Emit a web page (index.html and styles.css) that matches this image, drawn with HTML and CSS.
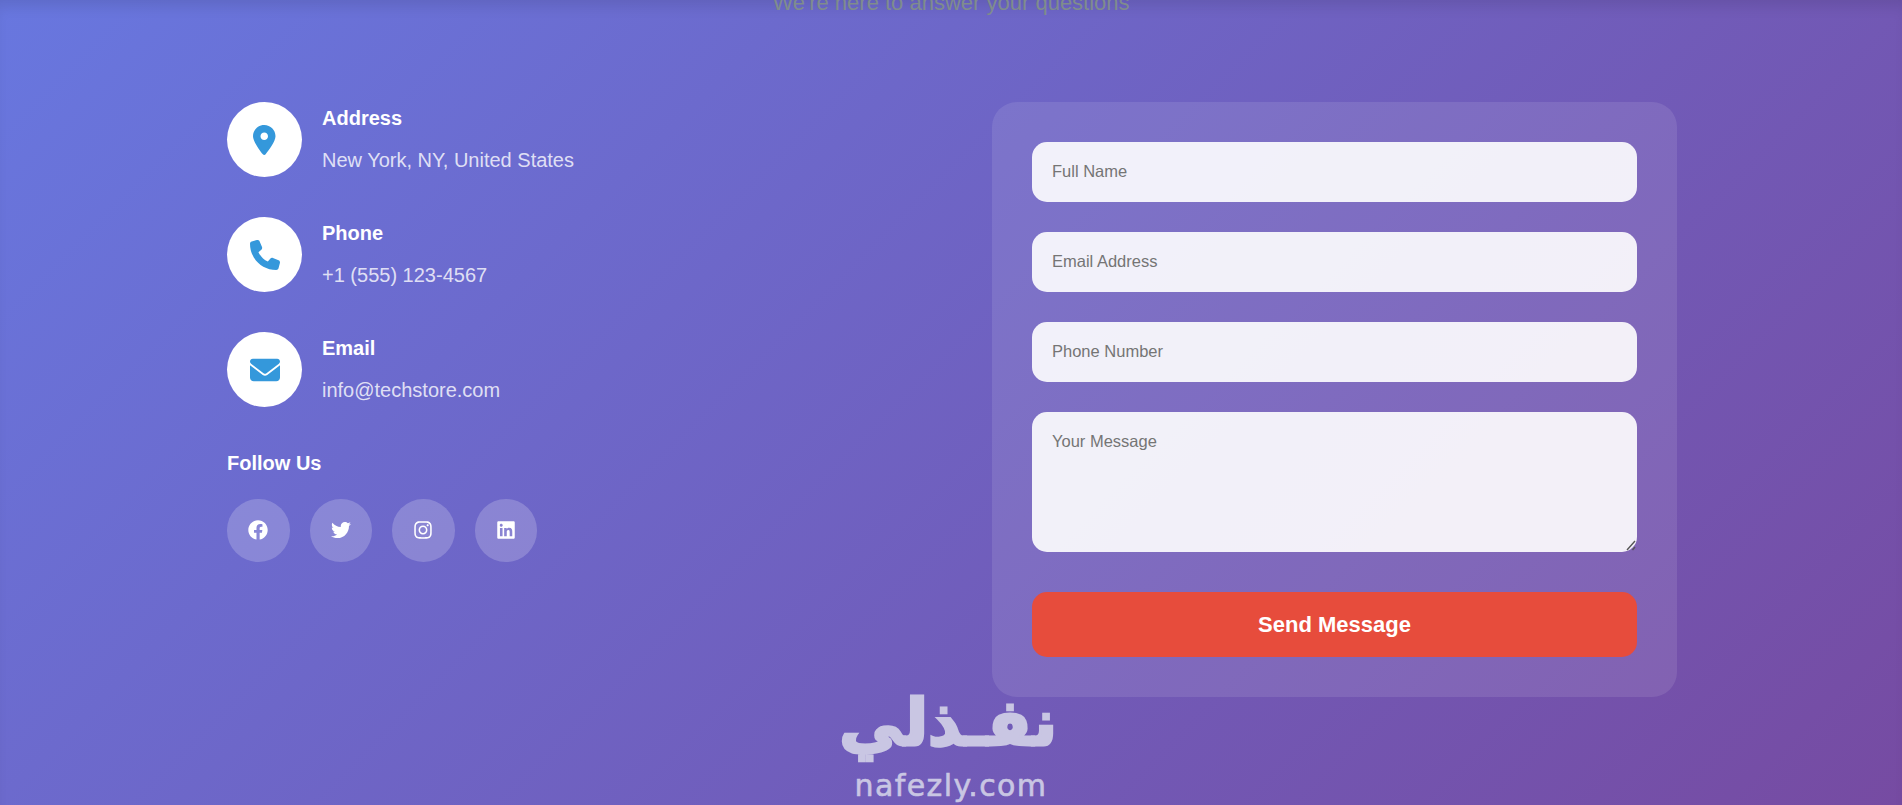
FILE: index.html
```html
<!DOCTYPE html>
<html lang="en">
<head>
    <meta charset="UTF-8">
    <meta name="viewport" content="width=device-width, initial-scale=1.0">
    <title>Contact Us</title>
    <link rel="stylesheet" href="styles.css">
</head>
<body>
    <section class="contact">
        <p class="contact-subtitle">We're here to answer your questions</p>

        <div class="contact-grid">
            <div class="contact-info">
                <div class="info-item">
                    <div class="info-icon">
                        <svg class="icon-pin" viewBox="0 0 384 512"><path d="M215.7 499.2C267 435 384 279.4 384 192C384 86 298 0 192 0S0 86 0 192c0 87.4 117 243 168.3 307.2c12.3 15.3 35.1 15.3 47.4 0zM192 256c-35.3 0-64-28.7-64-64s28.7-64 64-64s64 28.7 64 64s-28.7 64-64 64z"/></svg>
                    </div>
                    <div class="info-text">
                        <h4>Address</h4>
                        <p>New York, NY, United States</p>
                    </div>
                </div>
                <div class="info-item">
                    <div class="info-icon">
                        <svg class="icon-wide" viewBox="0 0 512 512"><path d="M164.9 24.6c-7.7-18.6-28-28.5-47.4-23.2l-88 24C12.1 30.2 0 46 0 64C0 311.4 200.6 512 448 512c18 0 33.8-12.1 38.6-29.5l24-88c5.3-19.4-4.6-39.7-23.2-47.4l-96-40c-16.3-6.8-35.2-2.1-46.3 11.6L304.7 368C234.3 334.7 177.3 277.7 144 207.3L193.3 167c13.7-11.2 18.4-30 11.6-46.3l-40-96z"/></svg>
                    </div>
                    <div class="info-text">
                        <h4>Phone</h4>
                        <p>+1 (555) 123-4567</p>
                    </div>
                </div>
                <div class="info-item">
                    <div class="info-icon">
                        <svg class="icon-wide" viewBox="0 0 512 512"><path d="M48 64C21.5 64 0 85.5 0 112c0 15.1 7.1 29.3 19.2 38.4L236.8 313.6c11.4 8.5 27 8.5 38.4 0L492.8 150.4c12.1-9.1 19.2-23.3 19.2-38.4c0-26.5-21.5-48-48-48H48zM0 176V384c0 35.3 28.7 64 64 64H448c35.3 0 64-28.7 64-64V176L294.4 339.2c-22.8 17.1-54 17.1-76.8 0L0 176z"/></svg>
                    </div>
                    <div class="info-text">
                        <h4>Email</h4>
                        <p>info@techstore.com</p>
                    </div>
                </div>

                <div class="social">
                    <h4>Follow Us</h4>
                    <div class="social-links">
                        <a href="#" class="social-link"><svg viewBox="0 0 512 512"><path d="M504 256C504 119 393 8 256 8S8 119 8 256c0 123.78 90.69 226.38 209.25 245V327.69h-63V256h63v-54.64c0-62.15 37.92-96.48 96-96.48 27.82 0 56.9 4.52 56.9 4.52v61h-31.28c-30.8 0-40.41 19.12-40.41 38.73V256h68.78l-11 71.69h-57.78V501C413.31 482.38 504 379.78 504 256z"/></svg></a>
                        <a href="#" class="social-link"><svg viewBox="0 0 512 512"><path d="M459.37 151.716c.325 4.548.325 9.097.325 13.645 0 138.72-105.583 298.558-298.558 298.558-59.452 0-114.68-17.219-161.137-47.106 8.447.974 16.568 1.299 25.34 1.299 49.055 0 94.213-16.568 130.274-44.832-46.132-.975-84.792-31.188-98.112-72.772 6.498.974 12.995 1.624 19.818 1.624 9.421 0 18.843-1.3 27.614-3.573-48.081-9.747-84.143-51.98-84.143-102.985v-1.299c13.969 7.797 30.214 12.67 47.431 13.319-28.264-18.843-46.781-51.005-46.781-87.391 0-19.492 5.197-37.36 14.294-52.954 51.655 63.675 129.3 105.258 216.365 109.807-1.624-7.797-2.599-15.918-2.599-24.04 0-57.828 46.782-104.934 104.934-104.934 30.213 0 57.502 12.67 76.67 33.137 23.715-4.548 46.456-13.32 66.599-25.34-7.798 24.366-24.366 44.833-46.132 57.827 21.117-2.273 41.584-8.122 60.426-16.243-14.292 20.791-32.161 39.308-52.628 54.253z"/></svg></a>
                        <a href="#" class="social-link"><svg viewBox="0 0 448 512"><path d="M224.1 141c-63.6 0-114.9 51.3-114.9 114.9s51.3 114.9 114.9 114.9S339 319.5 339 255.9 287.7 141 224.1 141zm0 189.6c-41.1 0-74.7-33.5-74.7-74.7s33.5-74.7 74.7-74.7 74.7 33.5 74.7 74.7-33.6 74.7-74.7 74.7zm146.4-194.3c0 14.9-12 26.8-26.8 26.8-14.9 0-26.8-12-26.8-26.8s12-26.8 26.8-26.8 26.8 12 26.8 26.8zm76.1 27.2c-1.7-35.9-9.9-67.7-36.2-93.9-26.2-26.2-58-34.4-93.9-36.2-37-2.1-147.9-2.1-184.9 0-35.8 1.7-67.6 9.9-93.9 36.1s-34.4 58-36.2 93.9c-2.1 37-2.1 147.9 0 184.9 1.7 35.9 9.9 67.7 36.2 93.9s58 34.4 93.9 36.2c37 2.1 147.9 2.1 184.9 0 35.9-1.7 67.7-9.9 93.9-36.2 26.2-26.2 34.4-58 36.2-93.9 2.1-37 2.1-147.8 0-184.8zM398.8 388c-7.8 19.6-22.9 34.7-42.6 42.6-29.5 11.7-99.5 9-132.1 9s-102.7 2.6-132.1-9c-19.6-7.8-34.7-22.9-42.6-42.6-11.7-29.5-9-99.5-9-132.1s-2.6-102.7 9-132.1c7.8-19.6 22.9-34.7 42.6-42.6 29.5-11.7 99.5-9 132.1-9s102.7-2.6 132.1 9c19.6 7.8 34.7 22.9 42.6 42.6 11.7 29.5 9 99.5 9 132.1s2.7 102.7-9 132.1z"/></svg></a>
                        <a href="#" class="social-link"><svg viewBox="0 0 448 512"><path d="M416 32H31.9C14.3 32 0 46.5 0 64.3v383.4C0 465.5 14.3 480 31.9 480H416c17.6 0 32-14.5 32-32.3V64.3c0-17.8-14.4-32.3-32-32.3zM135.4 416H69V202.2h66.5V416zm-33.2-243c-21.3 0-38.5-17.3-38.5-38.5S80.9 96 102.2 96c21.2 0 38.5 17.3 38.5 38.5 0 21.3-17.2 38.5-38.5 38.5zm282.1 243h-66.4V312c0-24.8-.5-56.7-34.5-56.7-34.6 0-39.9 27-39.9 54.9V416h-66.4V202.2h63.7v29.2h.9c8.9-16.8 30.6-34.5 62.9-34.5 67.2 0 79.7 44.3 79.7 101.9V416z"/></svg></a>
                    </div>
                </div>
            </div>

            <form class="contact-form">
                <input type="text" placeholder="Full Name">
                <input type="email" placeholder="Email Address">
                <input type="tel" placeholder="Phone Number">
                <div class="message-box">
                    <textarea placeholder="Your Message"></textarea>
                    <svg class="resize-grip" viewBox="0 0 12 12"><path d="M10 1 2 10M10 7 7.5 10"/></svg>
                </div>
                <button type="submit">Send Message</button>
            </form>
        </div>

        <div class="watermark">
            <span class="watermark-ar" lang="ar" dir="rtl">نفـذلي</span>
            <span class="watermark-en">nafezly.com</span>
        </div>
    </section>
</body>
</html>
```

FILE: styles.css
```css
* {
    box-sizing: border-box;
}
html, body {
    margin: 0;
    padding: 0;
    height: 100%;
    overflow: hidden;
}
body {
    font-family: "Liberation Sans", Arial, sans-serif;
}
.contact {
    position: relative;
    height: 100%;
    overflow: hidden;
    background: linear-gradient(135deg, #6877df 0%, #764ba2 100%);
    box-shadow: inset 0 12px 14px -6px rgba(0, 0, 0, 0.1);
}
.contact-subtitle {
    margin: -12px 0 0;
    height: 114px;
    text-align: center;
    font-size: 22px;
    line-height: 30px;
    color: #7f8c8d;
}
.contact-grid {
    display: grid;
    grid-template-columns: 1fr 685px;
    column-gap: 79px;
    width: 1450px;
    margin-left: 227px;
    align-items: start;
}
.contact-info {
    color: #fff;
}
.info-item {
    display: flex;
    gap: 20px;
    margin-bottom: 40px;
}
.info-icon {
    flex: none;
    width: 75px;
    height: 75px;
    border-radius: 50%;
    background: #fff;
    display: flex;
    align-items: center;
    justify-content: center;
}
.info-icon svg {
    fill: #3498db;
    height: 30px;
    display: block;
}
.icon-pin {
    width: 22.5px;
}
.icon-wide {
    width: 30px;
}
.info-text h4, .social h4 {
    margin: 5px 0 0;
    font-size: 20px;
    line-height: 23px;
    font-weight: bold;
    color: #fff;
}
.info-text p {
    margin: 19px 0 0;
    font-size: 20px;
    line-height: 23px;
    color: rgba(255, 255, 255, 0.8);
}
.social {
    padding-top: 5px;
}
.social h4 {
    margin: 0 0 24px;
}
.social-links {
    display: flex;
    gap: 20px;
}
.social-link {
    width: 62.5px;
    height: 62.5px;
    border-radius: 50%;
    background: rgba(255, 255, 255, 0.2);
    display: flex;
    align-items: center;
    justify-content: center;
}
.social-link svg {
    width: 20px;
    height: 20px;
    fill: #fff;
    display: block;
}
.contact-form {
    background: rgba(255, 255, 255, 0.1);
    border-radius: 25px;
    padding: 40px;
    display: flex;
    flex-direction: column;
    gap: 30px;
}
.contact-form input, .contact-form textarea {
    display: block;
    width: 100%;
    border: none;
    outline: none;
    border-radius: 15px;
    padding: 20px;
    background: rgba(255, 255, 255, 0.9);
    font-family: inherit;
    font-size: 16.5px;
    margin: 0;
}
.contact-form input {
    height: 60px;
    padding-top: 19px;
    padding-bottom: 21px;
}
.contact-form input::placeholder, .contact-form textarea::placeholder {
    color: #757575;
}
.message-box {
    position: relative;
    height: 140px;
}
.contact-form textarea {
    height: 140px;
    resize: none;
}
.resize-grip {
    position: absolute;
    right: 0;
    bottom: 0;
    width: 12px;
    height: 12px;
    fill: none;
    stroke: #555;
    stroke-width: 1.4;
}
.contact-form button {
    height: 65px;
    margin-top: 10px;
    border: none;
    border-radius: 15px;
    background: #e74c3c;
    color: #fff;
    font-family: inherit;
    font-size: 22px;
    font-weight: bold;
    cursor: pointer;
}
.watermark {
    position: absolute;
    left: 845px;
    top: 688px;
    width: 212px;
    color: #c9c6e3;
    text-align: center;
}
.watermark-ar {
    display: block;
    font-family: "DejaVu Sans", sans-serif;
    font-size: 64px;
    font-weight: bold;
    line-height: 70px;
    -webkit-text-stroke: 3px #c9c6e3;
}
.watermark-en {
    display: block;
    font-family: "DejaVu Sans", sans-serif;
    font-size: 30px;
    line-height: 36px;
    margin-top: 10px;
    letter-spacing: 1.4px;
    -webkit-text-stroke: 0.6px #c9c6e3;
}
```
